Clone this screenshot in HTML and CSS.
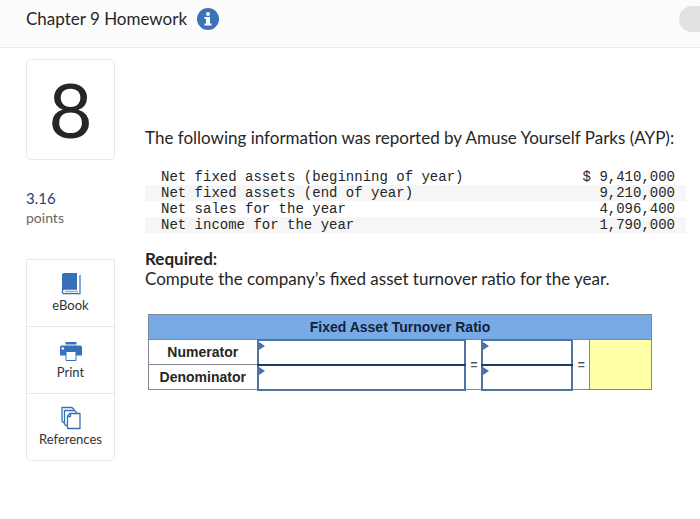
FILE: index.html
```
<!DOCTYPE html>
<html lang="en">
<head>
    <meta charset="utf-8">
    <title>Chapter 9 Homework</title>
    <link rel="stylesheet" href="styles.css">
</head>
<body>
    <header class="top-bar">
        <h1 class="assignment-title">Chapter 9 Homework</h1>
        <button class="info-btn" type="button" aria-label="Assignment information">
            <svg width="22" height="22" viewBox="0 0 22 22">
                <circle cx="11" cy="11" r="11" fill="#3b73b9"/>
                <circle cx="11" cy="6" r="2" fill="#fff"/>
                <path d="M7.500 9h5.500v6.500h1.500v2h-7v-2H9V11H7.500z" fill="#fff"/>
            </svg>
        </button>
        <button class="menu-btn" type="button" aria-label="Menu"></button>
    </header>

    <div class="page">
        <aside class="sidebar">
            <div class="question-number">8</div>
            <div class="points">
                <div class="points-value">3.16</div>
                <div class="points-label">points</div>
            </div>
            <nav class="tools">
                <a class="tool" href="#ebook">
                    <svg width="24" height="24" viewBox="0 0 24 24">
                        <path d="M5 1h13v16H5.500c-1.500 0-2.500.8-2.500 2V3c0-1.200.8-2 2-2z" fill="#3570b8"/>
                        <path d="M18 17.200H5.500a2.200 2.200 0 0 0 0 4.400H21V3" fill="none" stroke="#3570b8" stroke-width="1.200"/>
                        <path d="M6 19.500h13" stroke="#8fb3dc" stroke-width="1.500"/>
                    </svg>
                    eBook
                </a>
                <a class="tool" href="#print">
                    <svg width="24" height="24" viewBox="0 0 24 24">
                        <path d="M6.500 3h11v2.500h-11z" fill="#3570b8"/>
                        <path d="M2.500 6.500h19a1.500 1.500 0 0 1 1.500 1.500v8.500H1V8a1.500 1.500 0 0 1 1.500-1.500z" fill="#3570b8"/>
                        <circle cx="3.800" cy="9.500" r="1.300" fill="#fff"/>
                        <path d="M7 12.500h10v9H7z" fill="#fff" stroke="#3570b8"/>
                    </svg>
                    Print
                </a>
                <a class="tool" href="#references">
                    <svg width="24" height="24" viewBox="0 0 24 24" fill="#fff" stroke="#3570b8" stroke-width="1.300" stroke-linejoin="round">
                        <path d="M3 1.500h10l2 2v13H4.500L3 15z"/>
                        <path d="M5.500 4.500h10l2 2v13H7L5.500 18z"/>
                        <path d="M11 7.500h10v15H8.500V10z"/>
                        <path d="M11.500 7.500v3h-3" fill="none"/>
                    </svg>
                    References
                </a>
            </nav>
        </aside>

        <main class="question">
            <p class="intro">The following information was reported by Amuse Yourself Parks (AYP):</p>

            <table class="data-table">
                <tbody>
                    <tr>
                        <td>Net fixed assets (beginning of year)</td>
                        <td class="amount">$ 9,410,000</td>
                    </tr>
                    <tr>
                        <td>Net fixed assets (end of year)</td>
                        <td class="amount">9,210,000</td>
                    </tr>
                    <tr>
                        <td>Net sales for the year</td>
                        <td class="amount">4,096,400</td>
                    </tr>
                    <tr>
                        <td>Net income for the year</td>
                        <td class="amount">1,790,000</td>
                    </tr>
                </tbody>
            </table>

            <h2 class="required">Required:</h2>
            <p class="task">Compute the company’s fixed asset turnover ratio for the year.</p>

            <table class="answer-table">
                <colgroup>
                    <col class="col-label">
                    <col class="col-name">
                    <col class="col-sign">
                    <col class="col-value">
                    <col class="col-sign">
                    <col class="col-result">
                </colgroup>
                <thead>
                    <tr>
                        <th colspan="6">Fixed Asset Turnover Ratio</th>
                    </tr>
                </thead>
                <tbody>
                    <tr>
                        <th scope="row"><label for="numName">Numerator</label></th>
                        <td class="entry"><input id="numName" type="text"></td>
                        <td class="sign" rowspan="2">=</td>
                        <td class="entry"><input type="text" aria-label="Numerator amount"></td>
                        <td class="sign" rowspan="2">=</td>
                        <td class="result" rowspan="2"></td>
                    </tr>
                    <tr>
                        <th scope="row"><label for="denName">Denominator</label></th>
                        <td class="entry"><input id="denName" type="text"></td>
                        <td class="entry"><input type="text" aria-label="Denominator amount"></td>
                    </tr>
                </tbody>
            </table>
        </main>
    </div>
</body>
</html>
```
FILE: styles.css
```
* {
    margin: 0;
    padding: 0;
    box-sizing: border-box;
}

body {
    background: #fff;
    color: #262626;
    font-family: Lato, "Liberation Sans", sans-serif;
    font-size: 17px;
    line-height: 20px;
}

.top-bar {
    display: flex;
    align-items: center;
    height: 48px;
    padding: 0 0 10px 26px;
    background: #fcfcfc;
    border-bottom: 1px solid #ececec;
    overflow: hidden;
}

.assignment-title {
    font-size: 17px;
    font-weight: 400;
}

.info-btn {
    margin-left: 10px;
    height: 22px;
    border: none;
    background: none;
    cursor: pointer;
}

.menu-btn {
    flex: none;
    width: 48px;
    height: 26px;
    margin-left: auto;
    margin-right: -27px;
    border: none;
    border-radius: 13px;
    background: #e2e2e3;
    cursor: pointer;
}

.page {
    display: flex;
    gap: 30px;
    padding: 11px 14px 24px 26px;
}

.sidebar {
    flex: none;
    width: 89px;
}

.question-number {
    height: 101px;
    border: 1px solid #e8e8e8;
    border-radius: 5px;
    font-size: 76px;
    line-height: 97px;
    text-align: center;
}

.points {
    margin: 28px 0 31px;
    font-size: 15px;
}

.points-value {
    color: #1f4377;
}

.points-label {
    color: #666;
    font-size: 14px;
}

.tools {
    border: 1px solid #e8e8e8;
    border-radius: 0 0 5px 5px;
}

.tool {
    display: flex;
    flex-direction: column;
    align-items: center;
    height: 66px;
    padding-top: 12px;
    color: #333;
    font-size: 13px;
    line-height: 18px;
    text-decoration: none;
}

.tool + .tool {
    height: 67px;
    border-top: 1px solid #e8e8e8;
}

.question {
    flex: 1;
    padding-top: 69px;
}

.data-table {
    width: 100%;
    margin: 21px 0 16px;
    border-collapse: collapse;
    font-family: "Liberation Mono", monospace;
    font-size: 14px;
    line-height: 16px;
}

.data-table td {
    padding-left: 16px;
}

.data-table tr:nth-child(even) {
    background: #f6f6f6;
}

.data-table .amount {
    padding-right: 11px;
    text-align: right;
}

.required {
    font-size: 17px;
    font-weight: 700;
}

.answer-table {
    width: calc(100% - 37px);
    margin: 25px 0 0 3px;
    border-collapse: collapse;
    table-layout: fixed;
    font-family: "Liberation Sans", Arial, sans-serif;
    font-size: 14px;
}

.col-label {
    width: 109px;
}

.col-sign {
    width: 17px;
}

.col-value {
    width: 90px;
}

.col-result {
    width: 62px;
}

.answer-table th,
.answer-table td {
    height: 25px;
    border: 1px solid #7f8790;
}

.answer-table thead th {
    background: #78abe5;
    color: #14233b;
}

.answer-table .entry {
    position: relative;
    border: 2px solid #4f74a3;
}

.answer-table tbody tr:first-child .entry {
    border-bottom-color: #1f3d66;
}

.entry input {
    display: block;
    width: 100%;
    height: 22px;
    padding: 0 6px;
    border: none;
    outline: none;
    font: inherit;
}

/* marker in the corner of an editable cell */
.entry::before {
    content: '';
    position: absolute;
    top: 1px;
    left: 0;
    border-top: 4px solid transparent;
    border-bottom: 4px solid transparent;
    border-left: 6px solid #4472b4;
}

.answer-table .sign {
    font-size: 12px;
    font-weight: 700;
    color: #555;
    text-align: center;
}

.answer-table .result {
    background: #ffffa8;
}
```
